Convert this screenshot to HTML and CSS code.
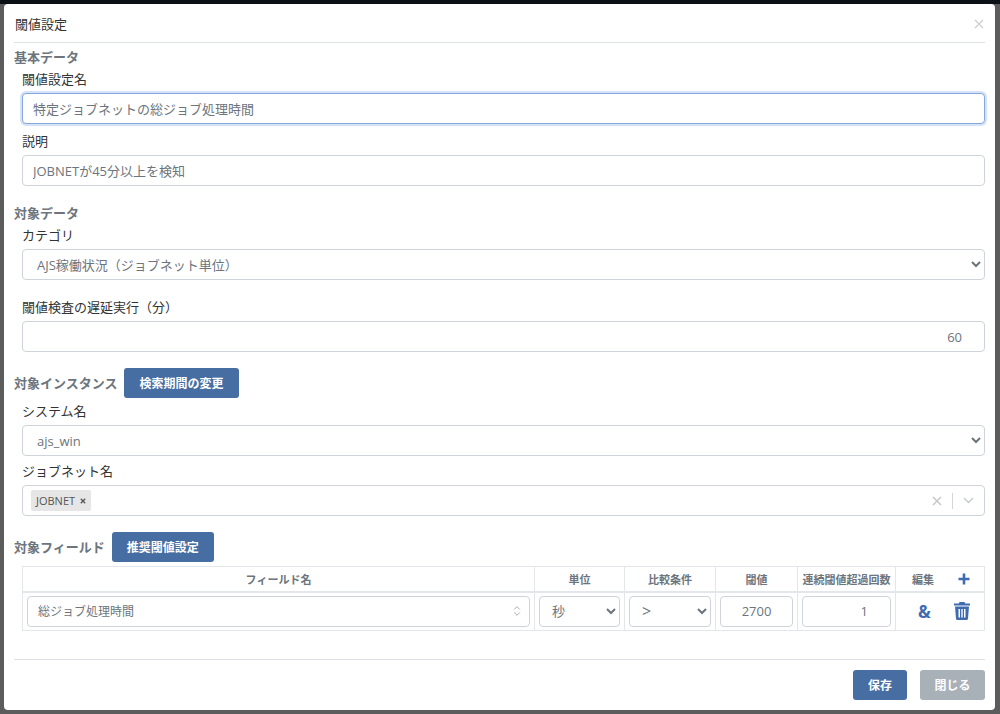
FILE: index.html
```html
<!DOCTYPE html>
<html lang="ja">
<head>
  <meta charset="UTF-8">
  <meta name="viewport" content="width=device-width, initial-scale=1.0">
  <title>閾値設定</title>
  <link rel="stylesheet" href="styles.css">
</head>
<body>
<div class="modal">
  <div class="modal-header">
    <span class="modal-title">閾値設定</span>
    <svg class="close-x" width="10" height="10" viewBox="0 0 10 10"><path d="M1 1l8 8M9 1l-8 8" stroke="#c9ced3" stroke-width="1.2" fill="none"/></svg>
  </div>

  <div class="modal-body">
    <div class="section-title first">基本データ</div>
    <div class="group">
      <label class="field-label">閾値設定名</label>
      <input type="text" class="form-control focused" value="特定ジョブネットの総ジョブ処理時間">
      <label class="field-label second">説明</label>
      <input type="text" class="form-control" value="JOBNETが45分以上を検知">
    </div>

    <div class="section-title data">対象データ</div>
    <div class="group">
      <label class="field-label">カテゴリ</label>
      <select class="form-control form-select"><option>AJS稼働状況（ジョブネット単位）</option></select>
      <label class="field-label delay">閾値検査の遅延実行（分）</label>
      <input type="text" class="form-control num" value="60">
    </div>

    <div class="section-row instance">
      <span class="section-title">対象インスタンス</span>
      <button class="btn btn-primary">検索期間の変更</button>
    </div>
    <div class="group">
      <label class="field-label">システム名</label>
      <select class="form-control form-select"><option>ajs_win</option></select>
      <label class="field-label job">ジョブネット名</label>
      <div class="form-control multi">
        <span class="tag">JOBNET <svg width="6" height="6" viewBox="0 0 6 6"><path d="M.8.8l4.4 4.4M5.2.8L.8 5.2" stroke="#555" stroke-width="1.3"/></svg></span>
        <span class="multi-icons">
          <svg width="10" height="10" viewBox="0 0 10 10"><path d="M1 1l8 8M9 1l-8 8" stroke="#c6c9cc" stroke-width="1.6"/></svg>
          <i class="multi-sep"></i>
          <svg width="11" height="7" viewBox="0 0 11 7"><path d="M1 1l4.5 4.5L10 1" stroke="#c6c9cc" stroke-width="1.4" fill="none"/></svg>
        </span>
      </div>
    </div>

    <div class="section-row fields">
      <span class="section-title">対象フィールド</span>
      <button class="btn btn-primary">推奨閾値設定</button>
    </div>
    <table class="field-table">
      <thead>
        <tr>
          <th class="c-name">フィールド名</th>
          <th class="c-unit">単位</th>
          <th class="c-cond">比較条件</th>
          <th class="c-val">閾値</th>
          <th class="c-count">連続閾値超過回数</th>
          <th class="c-edit">
            <div class="edit-head">
              <span>編集</span>
              <svg width="14" height="14" viewBox="0 0 14 14"><path d="M7 1.5v11M1.5 7h11" stroke="#3f6cb0" stroke-width="2.6"/></svg>
            </div>
          </th>
        </tr>
      </thead>
      <tbody>
        <tr>
          <td>
            <div class="form-control combo">
              <span>総ジョブ処理時間</span>
              <svg width="8" height="12" viewBox="0 0 8 12"><path d="M1.2 4.5L4 1.7l2.8 2.8M1.2 7.5L4 10.3l2.8-2.8" stroke="#a8adb2" fill="none"/></svg>
            </div>
          </td>
          <td><select class="form-control form-select small"><option>秒</option></select></td>
          <td><select class="form-control form-select small cond"><option>&gt;</option></select></td>
          <td><input type="text" class="form-control center" value="2700"></td>
          <td><input type="text" class="form-control count" value="1"></td>
          <td>
            <div class="edit-cell">
              <span class="amp">&amp;</span>
              <svg width="16" height="18" viewBox="0 0 16 18"><path fill="#3f6cb0" d="M5.5 0h5l.7 1.5H16v2H0v-2h4.800zM1 4.500h14l-1 12c0 .9-.6 1.500-1.500 1.500h-9C2.600 18 2 17.400 2 16.500zM4.500 7v8.500H6V7zM7.300 7v8.500h1.400V7zM10 7v8.500h1.500V7z" fill-rule="evenodd"/></svg>
            </div>
          </td>
        </tr>
      </tbody>
    </table>
  </div>

  <div class="modal-footer">
    <button class="btn btn-primary save">保存</button>
    <button class="btn btn-secondary close">閉じる</button>
  </div>
</div>
</body>
</html>
```

FILE: styles.css
```css
* {
  box-sizing: border-box;
}

html, body {
  height: 100%;
}

body {
  margin: 0;
  overflow: hidden;
  background-color: #5c5c5c;
  border-top: 4px solid #0b1116;
  font-family: "Open Sans", "Noto Sans CJK JP", sans-serif;
  font-size: 13px;
  color: #333;
}

.modal {
  width: 991px;
  height: 706px;
  margin-left: 4px;
  background-color: #fff;
  border-radius: 4px;
  padding: 0 10px 0 10px;
  display: flex;
  flex-direction: column;
}

.modal-header {
  height: 39px;
  display: flex;
  justify-content: space-between;
  align-items: center;
  border-bottom: 1px solid #dee2e6;
  padding: 0 1px 0 1px;
  color: #333;
}

.close-x {
  margin-top: 1px;
}

.modal-body {
  flex: 1;
}

.section-title {
  color: #6c757d;
  font-weight: 700;
  line-height: 18px;
}

.section-title.first {
  margin-top: 5px;
}

.section-title.data {
  margin-top: 18px;
}

.section-row {
  display: flex;
  align-items: center;
  gap: 7px;
}

.section-row.instance {
  margin-top: 16px;
}

.section-row.fields {
  margin-top: 16px;
}

.group {
  padding-left: 8px;
}

.field-label {
  display: block;
  line-height: 18px;
  margin-top: 4px;
  margin-bottom: 5px;
}

.field-label.second {
  margin-top: 8px;
}

.field-label.delay {
  margin-top: 18px;
  margin-bottom: 5px;
}

.field-label.job {
  margin-top: 6px;
}

.form-control {
  display: block;
  width: 100%;
  height: 31px;
  padding: 0 10px;
  font: inherit;
  color: #6c757d;
  background-color: #fff;
  border: 1px solid #ced4da;
  border-radius: 4px;
  outline: none;
}

.form-control.focused {
  border-color: #86a6de;
  box-shadow: 0 0 0 2px #d6e2f5;
}

.form-select {
  padding-left: 10px;
  color: #6c757d;
}

.num {
  text-align: right;
  padding-right: 22px;
}

.btn {
  height: 30px;
  padding: 0 15px;
  font: inherit;
  font-size: 12px;
  font-weight: 700;
  color: #fff;
  border: none;
  border-radius: 3px;
  cursor: pointer;
}

.btn-primary {
  background-color: #466ea2;
}

.btn-secondary {
  background-color: #a8b0b8;
}

.multi {
  position: relative;
  display: flex;
  align-items: center;
  padding-left: 8px;
}

.tag {
  display: flex;
  align-items: center;
  gap: 5px;
  height: 21px;
  padding: 0 5px;
  background-color: #e6e6e6;
  border-radius: 2px;
  font-size: 11px;
  color: #555;
}

.multi-icons {
  margin-left: auto;
  display: flex;
  align-items: center;
  gap: 10px;
  padding-right: 0;
}

.multi-sep {
  width: 1px;
  height: 16px;
  background-color: #d5d5d5;
}

.field-table {
  width: 963px;
  margin: 4px 0 0 8px;
  border-collapse: collapse;
  table-layout: fixed;
  color: #6c757d;
}

.field-table th,
.field-table td {
  border: 1px solid #e3e7eb;
  padding: 0 4px;
}

.field-table th {
  height: 25px;
  font-size: 11px;
  font-weight: 700;
  text-align: center;
  border-bottom-width: 2px;
}

.field-table td {
  height: 39px;
}

.c-name { width: 512px; }
.c-unit { width: 90px; }
.c-cond { width: 91px; }
.c-val { width: 82px; }
.c-count { width: 98px; }

.edit-head {
  display: flex;
  align-items: center;
  justify-content: space-between;
  padding: 0 9px 0 12px;
}

.combo {
  display: flex;
  align-items: center;
  justify-content: space-between;
  font-size: 12px;
  padding-right: 8px;
}

.small {
  padding-left: 8px;
}

.cond {
  font-size: 16px;
}

.center {
  text-align: center;
}

.count {
  text-align: right;
  padding-right: 22px;
}

.edit-cell {
  display: flex;
  align-items: center;
  justify-content: space-between;
  padding: 0 10px 0 18px;
}

.amp {
  font-size: 17px;
  font-weight: 700;
  color: #3f6cb0;
}

.modal-footer {
  height: 51px;
  margin: 0 0 0 0;
  border-top: 1px solid #dee2e6;
  display: flex;
  justify-content: flex-end;
  align-items: flex-start;
  gap: 13px;
  padding-top: 10px;
}

.save {
  width: 54px;
  padding: 0;
}

.close {
  width: 65px;
  padding: 0;
}
```
